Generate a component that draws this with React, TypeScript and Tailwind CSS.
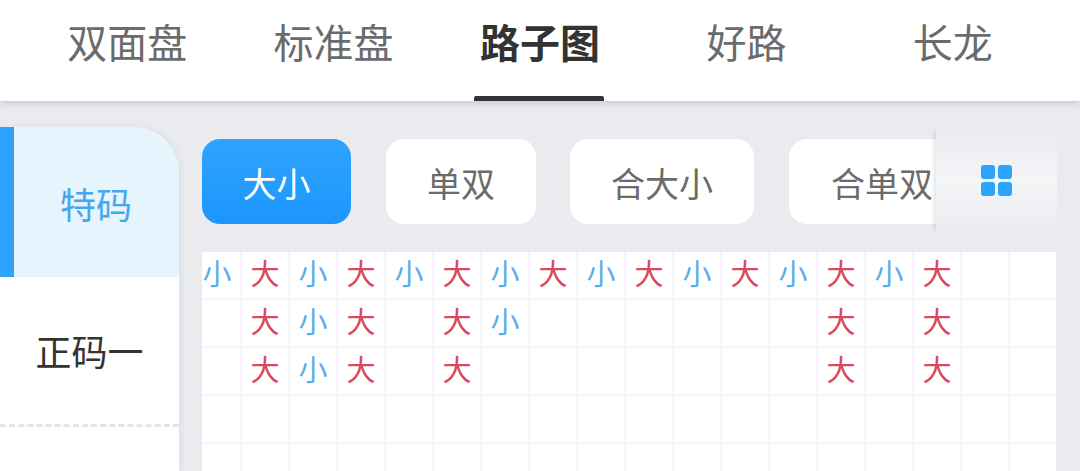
const tabs = ["双面盘", "标准盘", "路子图", "好路", "长龙"];
const pills = ["大小", "单双", "合大小", "合单双"];
const rows = [
  "小大小大小大小大小大小大小大小大  ",
  " 大小大 大小      大 大  ",
  " 大小大 大       大 大  ",
  "                  ",
  "                  ",
];
const widths = ["w-[149px]", "ml-[35px] w-[150px]", "ml-[34px] w-[184px]", "ml-[35px] w-[186px]"];

export default function App() {
  return (
    <div className="relative h-[471px] w-[1080px] overflow-hidden bg-[#e9ebef] font-['Noto_Sans_CJK_SC','Noto_Sans',sans-serif]">
      <header className="relative z-10 flex h-[101px] bg-white px-6 shadow-[0_2px_6px_rgba(90,95,110,0.25)]">
        {tabs.map((t) => {
          const active = t === "路子图";
          return (
            <div key={t} className="relative flex flex-1 items-start justify-center pt-[12px]">
              <span className={active ? "text-[40px] leading-[58px] font-bold text-[#333]" : "text-[40px] leading-[58px] text-[#6b6b6b]"}>{t}</span>
              {active && <span className="absolute bottom-0 mr-[2px] h-[5px] w-[130px] rounded-t-[2px] bg-[#333]" />}
            </div>
          );
        })}
      </header>
      <div className="flex h-[370px] pt-[26px]">
        <aside className="w-[179px] shrink-0 overflow-hidden rounded-tr-[46px] bg-white shadow-[2px_0_6px_rgba(90,95,110,0.08)]">
          <div className="flex h-[150px] items-center justify-center border-l-[14px] border-[#2ea3fd] bg-[#e6f4fe] pt-[2px] pr-[1px] text-[36px] text-[#45a8ee]">特码</div>
          <div className="flex h-[150px] items-center justify-center border-b-[3px] border-dashed border-[#e3e5ee] pb-[2px] text-[36px] text-[#333]">正码一</div>
        </aside>
        <main className="min-w-0 flex-1 pl-[23px] pr-[24px] pt-[12px]">
          <div className="flex w-[877px] overflow-hidden">
            {pills.map((p, i) => (
              <div
                key={p}
                className={
                  i === 0
                    ? `${widths[i]} flex h-[85px] shrink-0 items-center justify-center rounded-[18px] bg-gradient-to-b from-[#30a3ff] to-[#1b96fe] pt-[1px] text-[34px] text-white`
                    : `${widths[i]} flex h-[85px] shrink-0 items-center justify-center rounded-[18px] bg-white pt-[1px] text-[34px] text-[#6b6b6b]`
                }
              >
                {p}
              </div>
            ))}
          </div>
          <div className="mt-[28px] w-[854px] overflow-hidden bg-white">
            <div className="ml-[-8px] w-[864px]">
              {rows.map((r, y) => (
                <div key={y} className="flex h-[48px] border-b-2 border-[#f5f6fc]">
                  {Array.from(r.padEnd(18, " ")).map((c, x) => (
                    <div
                      key={x}
                      className={
                        c === "大"
                          ? "flex w-[48px] shrink-0 items-center justify-center border-r-2 border-[#f5f6fc] pb-[5px] text-[29px] leading-none text-[#d94a58]"
                          : "flex w-[48px] shrink-0 items-center justify-center border-r-2 border-[#f5f6fc] pb-[5px] text-[29px] leading-none text-[#5aaee6]"
                      }
                    >
                      {c.trim()}
                    </div>
                  ))}
                </div>
              ))}
            </div>
          </div>
        </main>
      </div>
      <div className="absolute left-[936px] top-[128px] z-20 flex h-[107px] w-[121px] items-center justify-center bg-gradient-to-b from-[#e9ebef] via-[#f4f5f7] to-[#e9ebef] shadow-[-4px_0_6px_-4px_rgba(60,60,70,0.25)]">
        <svg width="31" height="31" viewBox="0 0 31 31" fill="#2ea3fd" className="mb-[2px]">
          <rect x="0" y="0" width="14" height="14" rx="3" />
          <rect x="17" y="0" width="14" height="14" rx="3" />
          <rect x="0" y="17" width="14" height="14" rx="3" />
          <rect x="17" y="17" width="14" height="14" rx="3" />
        </svg>
      </div>
    </div>
  );
}
